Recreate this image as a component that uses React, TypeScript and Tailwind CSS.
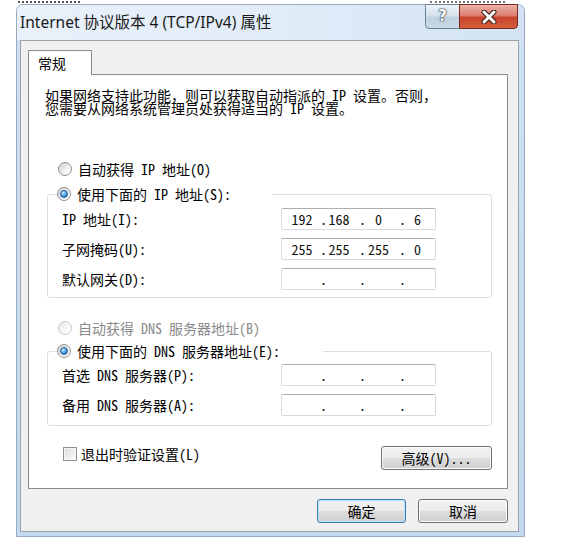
import React from "react";

function Radio({ checked = false, disabled = false }: { checked?: boolean; disabled?: boolean }) {
  return (
    <span
      className={
        disabled
          ? "relative block w-[14px] h-[14px] shrink-0 rounded-full border border-[#c9c9c9] bg-[linear-gradient(135deg,#e6e6e6,#f8f8f8_60%,#ffffff)]"
          : "relative block w-[14px] h-[14px] shrink-0 rounded-full border border-[#8e8f8f] bg-[linear-gradient(135deg,#cfcfcf,#f3f3f3_60%,#ffffff)]"
      }
    >
      {checked && (
        <span className="absolute left-[2px] top-[2px] w-[8px] h-[8px] rounded-full border border-[#1b5a9c] bg-[radial-gradient(circle_at_35%_30%,#d7efff_0%,#58a9ec_45%,#1260b5_100%)]" />
      )}
    </span>
  );
}

function IpBox({ v }: { v?: string[] }) {
  const a = v ?? ["", "", "", ""];
  return (
    <div className="w-[155px] h-[22px] rounded-[2px] border border-[#d6dae0] border-t-[#abafb7] bg-white flex items-center pl-[2px] text-[14px] leading-none text-[#111]">
      <span className="w-[36px] text-center">{a[0]}</span>
      <span className="w-[6px] text-center">.</span>
      <span className="w-[33px] pr-[7px] text-center">{a[1]}</span>
      <span className="w-[6px] text-center">.</span>
      <span className="w-[34px] pr-[7px] text-center">{a[2]}</span>
      <span className="w-[6px] text-center">.</span>
      <span className="w-[30px] pr-[5px] text-center">{a[3]}</span>
    </div>
  );
}

function Row({ label, v }: { label: string; v?: string[] }) {
  return (
    <div className="flex items-center pl-[14px]">
      <span className="w-[219px] leading-[16px]">{label}</span>
      <IpBox v={v} />
    </div>
  );
}

function WinButton({ children, def = false, w }: { children: React.ReactNode; def?: boolean; w: string }) {
  return (
    <button
      className={
        def
          ? "h-[24px] rounded-[3px] border border-[#3c7fb1] bg-[linear-gradient(#f2f2f2_0%,#ebebeb_50%,#dddddd_50%,#cfcfcf_100%)] shadow-[inset_0_0_0_1px_#b7e0fa] text-[14px] leading-none flex items-center justify-center " + w
          : "h-[24px] rounded-[3px] border border-[#707070] bg-[linear-gradient(#f2f2f2_0%,#ebebeb_50%,#dddddd_50%,#cfcfcf_100%)] shadow-[inset_0_0_0_1px_#fbfbfb] text-[14px] leading-none flex items-center justify-center " + w
      }
    >
      {children}
    </button>
  );
}

export default function App() {
  return (
    <div className="w-[586px] h-[541px] bg-white overflow-hidden font-['Noto_Sans_Mono_CJK_SC','Noto_Sans_CJK_SC',sans-serif] text-[14px] text-black">
      <div className="h-[4px] flex items-start pl-[18px]">
        <div className="w-[62px] mt-[1px] border-t-2 border-dotted border-[#555]" />
        <div className="w-[350px]" />
        <div className="w-[75px] mt-[1px] border-t-2 border-dotted border-[#777]" />
      </div>
      <div className="ml-[16px] w-[509px] h-[533px] rounded-t-[7px] border border-[#9aaabd] bg-[linear-gradient(180deg,#dbe8f6_0%,#cfe0f2_8%,#c3d9ef_100%)] flex flex-col relative">
        <div className="h-[35px] flex items-center pl-[3px] bg-[linear-gradient(90deg,#e9f1fa_0%,#e2edf8_45%,#d3e3f4_100%)] rounded-t-[6px]">
          <span className="font-['Noto_Sans','Noto_Sans_CJK_SC',sans-serif] text-[15.5px] text-[#1a1a1a] leading-none mt-[1px]">
            Internet 协议版本 4 (TCP/IPv4) 属性
          </span>
        </div>
        <div className="absolute top-[-1px] right-[6px] flex">
          <div className="w-[35px] h-[25px] rounded-bl-[4px] border border-[#6f8196] bg-[linear-gradient(180deg,#eef3f8_0%,#d7e2ed_45%,#c2d1e0_55%,#c9d8e6_100%)] flex items-center justify-center">
            <span className="font-['DejaVu_Sans',sans-serif] font-bold text-[15px] leading-none text-white [text-shadow:0_0_1px_#2e3b4a,0_0_1px_#2e3b4a,0_0_2px_#2e3b4a]">?</span>
          </div>
          <div className="w-[59px] h-[25px] -ml-px rounded-br-[4px] border border-[#7a2a1f] bg-[linear-gradient(180deg,#eab2a6_0%,#dc8070_45%,#c7432b_55%,#d6603f_100%)] flex items-center justify-center">
            <svg width="18" height="14" viewBox="0 0 18 14">
              <path d="M4 2 L14 12 M14 2 L4 12" stroke="#3a1a14" strokeWidth="5" strokeLinecap="round" />
              <path d="M4 2 L14 12 M14 2 L4 12" stroke="#ffffff" strokeWidth="3" strokeLinecap="round" />
            </svg>
          </div>
        </div>

        <div className="ml-[3px] mr-[5px] h-[492px] border border-[#9aa3ad] bg-[#f0f0f0] flex flex-col">
          <div className="ml-[7px] mt-[9px] w-[64px] h-[25px] border border-b-0 border-[#898c95] bg-white relative z-10 -mb-px pl-[9px] flex items-center leading-none">
            常规
          </div>
          <div className="ml-[7px] mr-[10px] h-[415px] border border-[#898c95] bg-white flex flex-col">
            <div className="pl-[16px] mt-[14px] leading-[13px]">
              <div>如果网络支持此功能，则可以获取自动指派的 IP 设置。否则，</div>
              <div>您需要从网络系统管理员处获得适当的 IP 设置。</div>
            </div>

            <div className="mt-[46px] pl-[29px] h-[16px] flex items-center">
              <Radio />
              <span className="ml-[6px] leading-none">自动获得 IP 地址(O)</span>
            </div>

            <fieldset className="mt-[9px] ml-[18px] mr-[15px] border border-[#d5dfe5] rounded-[3px] pb-[7px]">
              <legend className="ml-[9px] w-[215px]">
                <div className="h-[16px] flex items-center">
                  <Radio checked />
                  <span className="ml-[6px] leading-none">使用下面的 IP 地址(S):</span>
                </div>
              </legend>
              <div className="pt-[6px] flex flex-col gap-[8px]">
                <Row label="IP 地址(I):" v={["192", "168", "0", "6"]} />
                <Row label="子网掩码(U):" v={["255", "255", "255", "0"]} />
                <Row label="默认网关(D):" />
              </div>
            </fieldset>

            <div className="mt-[22px] pl-[29px] h-[16px] flex items-center">
              <Radio disabled />
              <span className="ml-[6px] leading-none text-[#8a8a8a]">自动获得 DNS 服务器地址(B)</span>
            </div>

            <fieldset className="mt-[7px] ml-[18px] mr-[15px] border border-[#d5dfe5] rounded-[3px] pb-[9px]">
              <legend className="ml-[9px] w-[266px]">
                <div className="h-[16px] flex items-center">
                  <Radio checked />
                  <span className="ml-[6px] leading-none">使用下面的 DNS 服务器地址(E):</span>
                </div>
              </legend>
              <div className="pt-[5px] flex flex-col gap-[8px]">
                <Row label="首选 DNS 服务器(P):" />
                <Row label="备用 DNS 服务器(A):" />
              </div>
            </fieldset>

            <div className="mt-[20px] flex items-start pl-[34px] pr-[15px]">
              <div className="h-[16px] flex items-center flex-1">
                <span className="block w-[14px] h-[14px] border border-[#8e8f8f] bg-[linear-gradient(135deg,#d6d8dc,#f4f4f4_70%,#ffffff)] shadow-[inset_0_0_0_1px_#f6f6f6]" />
                <span className="ml-[4px] leading-none">退出时验证设置(L)</span>
              </div>
              <WinButton w="w-[111px]">高级(V)...</WinButton>
            </div>
          </div>

          <div className="mt-[10px] flex justify-end gap-[12px] pr-[10px]">
            <WinButton def w="w-[89px]">确定</WinButton>
            <WinButton w="w-[90px]">取消</WinButton>
          </div>
        </div>
      </div>
    </div>
  );
}
